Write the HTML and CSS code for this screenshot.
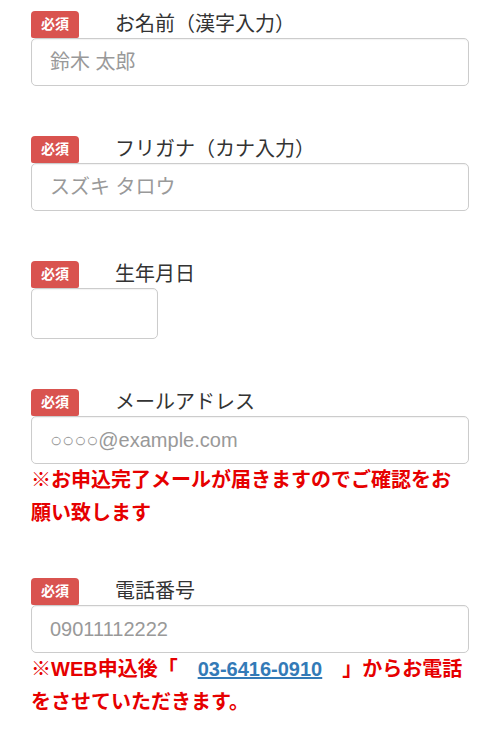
FILE: index.html
```html
<!DOCTYPE html>
<html lang="ja">
<head>
  <meta charset="UTF-8"/>
  <meta name="viewport" content="width=device-width, initial-scale=1.0"/>
  <title>お申込みフォーム</title>
  <link rel="stylesheet" href="styles.css">
</head>
<body>
  <form class="entry-form" autocomplete="off">

    <div class="field">
      <div class="field-head">
        <span class="req">必須</span>
        <label for="name">お名前（漢字入力）</label>
      </div>
      <input type="text" id="name" class="form-input" placeholder="鈴木 太郎">
    </div>

    <div class="field">
      <div class="field-head">
        <span class="req">必須</span>
        <label for="kana">フリガナ（カナ入力）</label>
      </div>
      <input type="text" id="kana" class="form-input" placeholder="スズキ タロウ">
    </div>

    <div class="field">
      <div class="field-head">
        <span class="req">必須</span>
        <label for="birth">生年月日</label>
      </div>
      <input type="text" id="birth" class="form-input date-input">
    </div>

    <div class="field">
      <div class="field-head">
        <span class="req">必須</span>
        <label for="email">メールアドレス</label>
      </div>
      <input type="email" id="email" class="form-input" placeholder="○○○○@example.com">
      <p class="note">※お申込完了メールが届きますのでご確認をお願い致します</p>
    </div>

    <div class="field">
      <div class="field-head">
        <span class="req">必須</span>
        <label for="tel">電話番号</label>
      </div>
      <input type="tel" id="tel" class="form-input" placeholder="09011112222">
      <p class="note">※WEB申込後「　<a href="tel:0364160910">03-6416-0910</a>　」からお電話をさせていただきます。</p>
    </div>

  </form>
</body>
</html>
```

FILE: styles.css
```css
body { margin:0; background:#fff; color:#333; font-family:"Liberation Sans", "Noto Sans CJK JP", sans-serif; }
.entry-form { padding:10px 31px 0; }
.field { margin-bottom:49px; }
.field-head { display:flex; align-items:center; height:28px; }
.req {
  display:inline-block;
  height:27px;
  line-height:27px;
  padding:0 10px;
  background:#d9534f;
  color:#fff;
  font-size:14px;
  font-weight:bold;
  border-radius:4px 4px 2px 2px;
}
.field-head label { margin-left:36px; font-size:20px; color:#333; margin-bottom:4px; }
.form-input {
  display:block;
  box-sizing:border-box;
  width:100%;
  height:48px;
  padding:0 18px;
  margin:0;
  border:1px solid #ccc;
  border-radius:5px;
  background:#fff;
  font-family:inherit;
  font-size:20px;
  color:#333;
  box-shadow:inset 0 1px 1px rgba(0,0,0,0.05);
}
.form-input::placeholder { color:#999; }
.date-input { width:127px; height:51px; }
.note { margin:0 0 -2px; font-size:20px; line-height:33px; font-weight:bold; color:#e60000; }
.note a { color:#337ab7; text-decoration:underline; }
```
